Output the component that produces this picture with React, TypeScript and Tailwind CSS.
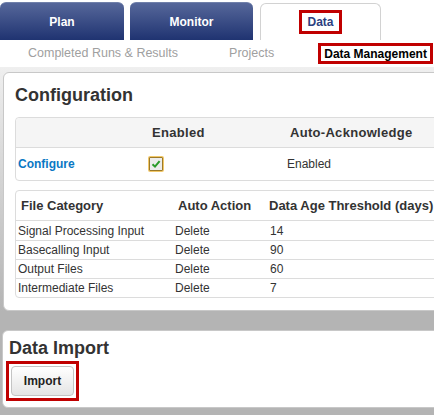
import React from "react";

const files = [
  ["Signal Processing Input", "Delete", "14"],
  ["Basecalling Input", "Delete", "90"],
  ["Output Files", "Delete", "60"],
  ["Intermediate Files", "Delete", "7"],
];

export default function App() {
  return (
    <div className="w-[434px] h-[415px] overflow-hidden bg-white font-['Liberation_Sans',Arial,sans-serif] text-[#333]">
      {/* Tabs */}
      <div className="h-[40px] flex items-end bg-white">
        <div className="w-[124px] h-[38px] rounded-t-[6px] bg-[linear-gradient(to_bottom,#56679a,#1f3371)] border-t border-[#7080aa] flex items-center justify-center text-white font-bold text-[12px]">
          Plan
        </div>
        <div className="ml-[6px] w-[123px] h-[38px] rounded-t-[6px] bg-[linear-gradient(to_bottom,#56679a,#1f3371)] border-t border-[#7080aa] flex items-center justify-center text-white font-bold text-[12px]">
          Monitor
        </div>
        <div className="ml-[7px] w-[121px] h-[37px] rounded-t-[6px] bg-white border border-b-0 border-[#d2d2d2] flex items-center justify-center">
          <div className="h-[24px] px-[5px] border-[3px] border-[#c00000] flex items-center text-[12px] font-bold text-[#2b3f80]">
            Data
          </div>
        </div>
      </div>
      {/* Sub nav */}
      <div className="h-[27px] flex items-center bg-white text-[12.5px]">
        <span className="ml-[28px] text-[#a0a0a0]">Completed Runs &amp; Results</span>
        <span className="ml-[51px] text-[#a0a0a0]">Projects</span>
        <div className="ml-[44px] h-[21px] px-[3px] border-[3px] border-[#c00000] flex items-center text-[12px] font-bold text-black">
          Data Management
        </div>
      </div>
      {/* Content */}
      <div className="h-[348px] pt-[5px] bg-[linear-gradient(to_bottom,#efefef_0px,#b4b4b4_245px,#b4b4b4_100%)]">
        <div className="ml-[3px] w-[460px] bg-white border border-[#c8c8c8] rounded-[6px] pt-[11px] pl-[11px] pb-[12px]">
          <div className="h-[22px] leading-[22px] text-[18px] font-bold text-[#333]">Configuration</div>
          {/* Config table */}
          <div className="mt-[11px] border border-[#dcdcdc] rounded-l-[4px]">
            <div className="h-[30px] bg-[#f5f5f5] flex items-center text-[13px] font-bold text-[#333] tracking-[0.3px] border-b border-[#dcdcdc] rounded-tl-[4px]">
              <div className="w-[131px]" />
              <div className="w-[138px] pl-[5px]">Enabled</div>
              <div className="pl-[5px]">Auto-Acknowledge</div>
            </div>
            <div className="h-[32px] flex items-center text-[12px]">
              <div className="w-[131px] pl-[2px] font-bold text-[#0a78c4]">Configure</div>
              <div className="w-[138px] pl-[2px] flex">
                <span className="w-[14px] h-[14px] border border-[#9c7a2a] ring-1 ring-[#f2c868] bg-[#ececec] flex items-center justify-center rounded-[1px]">
                  <svg width="10" height="10" viewBox="0 0 10 10">
                    <path d="M1.5 5.2 L4 7.6 L8.6 2.2" stroke="#2a9b2a" strokeWidth="2" fill="none" />
                  </svg>
                </span>
              </div>
              <div className="pl-[2px] text-[#333]">Enabled</div>
            </div>
          </div>
          {/* File table */}
          <div className="mt-[9px] border border-[#dcdcdc] rounded-l-[4px]">
            <div className="h-[30px] flex items-center text-[13px] font-bold text-[#333] border-b border-[#dcdcdc]">
              <div className="w-[157px] pl-[5px]">File Category</div>
              <div className="w-[95px] pl-[5px]">Auto Action</div>
              <div className="pl-[1px] whitespace-nowrap">Data Age Threshold (days)</div>
            </div>
            {files.map((r, i) => (
              <div
                key={r[0]}
                className={
                  "h-[19px] flex items-center text-[12px] text-[#333] " +
                  (i > 0 ? "border-t border-[#dcdcdc]" : "")
                }
              >
                <div className="w-[157px] pl-[2px]">{r[0]}</div>
                <div className="w-[95px] pl-[2px]">{r[1]}</div>
                <div className="pl-[2px]">{r[2]}</div>
              </div>
            ))}
          </div>
        </div>
        <div className="ml-[2px] mt-[19px] w-[460px] bg-white border border-[#c8c8c8] rounded-[6px] pt-[6px] pl-[3px] pb-[6px]">
          <div className="ml-[3px] h-[22px] leading-[22px] text-[18px] font-bold text-[#333]">Data Import</div>
          <div className="mt-[2px] inline-flex p-[2px] border-[3px] border-[#c00000]">
            <button className="w-[63px] h-[30px] rounded-[4px] border border-[#c4c4c4] bg-[linear-gradient(to_bottom,#ffffff,#e4e4e4)] text-[12px] font-bold text-[#222]">
              Import
            </button>
          </div>
        </div>
      </div>
    </div>
  );
}
